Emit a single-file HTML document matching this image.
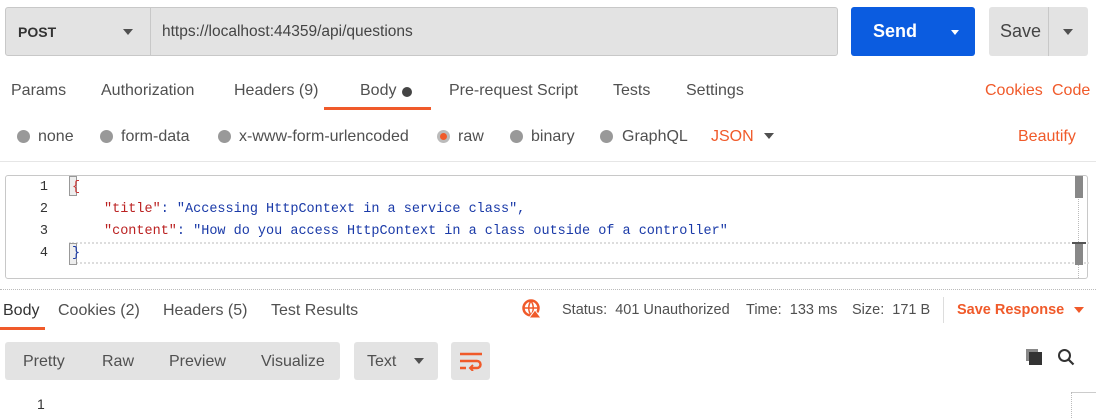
<!DOCTYPE html>
<html><head><meta charset="utf-8"><style>
*{box-sizing:border-box;margin:0;padding:0}
body{width:1096px;height:418px;background:#fff;font-family:"Liberation Sans",sans-serif;font-size:16px;color:#505050;position:relative;overflow:hidden}
.a{position:absolute;white-space:nowrap}
.or{color:#f05a2a}
.rad{position:absolute;width:13px;height:13px;border-radius:50%;background:#999;top:130px}
.mono{font-family:"Liberation Mono",monospace;font-size:13.5px}
.ln{position:absolute;width:20px;text-align:right;left:28px;color:#333}
.tri{display:block;width:0;height:0;border-left:5px solid transparent;border-right:5px solid transparent;border-top:6px solid #505050}
</style></head><body>
<div class="a" style="left:5px;top:7px;width:833px;height:49px;background:#e3e3e3;border:1px solid #c8c8c8;border-radius:3px"></div>
<div class="a" style="left:150px;top:8px;width:1px;height:47px;background:#c8c8c8"></div>
<div class="a" style="left:18px;top:24px;font-weight:bold;color:#333;font-size:14px">POST</div>
<div class="a" style="left:123px;top:29px"><span class="tri"></span></div>
<div class="a" style="left:162px;top:23px;color:#444;font-size:15.5px">https://localhost:44359/api/questions</div>
<div class="a" style="left:851px;top:7px;width:124px;height:49px;background:#0b5ce0;border-radius:3px"></div>
<div class="a" style="left:873px;top:21px;color:#fff;font-size:18px;font-weight:bold">Send</div>
<div class="a" style="left:951px;top:30px"><span class="tri" style="border-top-color:#fff;border-width:5px 4px 0"></span></div>
<div class="a" style="left:989px;top:7px;width:99px;height:49px;background:#e3e3e3;border-radius:3px"></div>
<div class="a" style="left:1048px;top:7px;width:1px;height:49px;background:#c8c8c8"></div>
<div class="a" style="left:1000px;top:21px;font-size:18px;color:#444">Save</div>
<div class="a" style="left:1063px;top:29px"><span class="tri"></span></div>
<div class="a" style="left:11px;top:82px">Params</div>
<div class="a" style="left:101px;top:82px">Authorization</div>
<div class="a" style="left:234px;top:82px">Headers (9)</div>
<div class="a" style="left:360px;top:82px">Body</div>
<div class="a" style="left:402px;top:87px;width:10px;height:10px;border-radius:50%;background:#444"></div>
<div class="a" style="left:324px;top:107px;width:107px;height:3px;background:#f05a2a"></div>
<div class="a" style="left:449px;top:82px">Pre-request Script</div>
<div class="a" style="left:613px;top:82px">Tests</div>
<div class="a" style="left:686px;top:82px">Settings</div>
<div class="a or" style="left:985px;top:82px">Cookies</div>
<div class="a or" style="left:1052px;top:82px">Code</div>
<div class="rad" style="left:17px"></div><div class="a" style="left:38px;top:128px">none</div>
<div class="rad" style="left:100px"></div><div class="a" style="left:121px;top:128px">form-data</div>
<div class="rad" style="left:218px"></div><div class="a" style="left:239px;top:128px">x-www-form-urlencoded</div>
<div class="rad" style="left:437px;background:#bbb"><div style="margin:3px;width:7px;height:7px;border-radius:50%;background:#f05a2a"></div></div><div class="a" style="left:458px;top:128px">raw</div>
<div class="rad" style="left:510px"></div><div class="a" style="left:531px;top:128px">binary</div>
<div class="rad" style="left:600px"></div><div class="a" style="left:622px;top:128px">GraphQL</div>
<div class="a or" style="left:711px;top:128px">JSON</div>
<div class="a" style="left:764px;top:133px"><span class="tri"></span></div>
<div class="a or" style="left:1018px;top:128px">Beautify</div>
<div class="a" style="left:0;top:161px;width:1096px;height:1px;background:#e6e6e6"></div>
<div class="a" style="left:5px;top:175px;width:1083px;height:104px;border:1px solid #c8c8c8;border-radius:3px"></div>
<div class="a" style="left:69px;top:242px;width:1020px;height:22px;border-top:2px dotted #ddd;border-bottom:2px dotted #ddd"></div>
<div class="a" style="left:69px;top:176px;width:8px;height:20px;border:1px solid #999;background:#eee"></div>
<div class="a" style="left:69px;top:243px;width:8px;height:22px;border:1px solid #999;background:#eee"></div>
<div class="a" style="left:1078px;top:176px;width:1px;height:102px;border-left:1px dotted #bbb"></div>
<div class="a" style="left:1075px;top:176px;width:8px;height:22px;background:#888"></div>
<div class="a" style="left:1075px;top:243px;width:8px;height:22px;background:#888"></div>
<div class="a" style="left:1072px;top:242px;width:14px;height:2px;background:#555"></div>
<div class="mono">
<div class="ln a" style="top:180px">1</div>
<div class="ln a" style="top:202px">2</div>
<div class="ln a" style="top:224px">3</div>
<div class="ln a" style="top:246px">4</div>
<div class="a" style="left:72px;top:180px;color:#c33">{</div>
<div class="a" style="left:104px;top:202px;color:#1a3aa8"><span style="color:#b22">"title"</span>: "Accessing HttpContext in a service class",</div>
<div class="a" style="left:104px;top:224px;color:#1a3aa8"><span style="color:#b22">"content"</span>: "How do you access HttpContext in a class outside of a controller"</div>
<div class="a" style="left:72px;top:246px;color:#1a3aa8">}</div>
</div>
<div class="a" style="left:0;top:289px;width:1096px;height:1px;border-top:1px dotted #bbb"></div>
<div class="a" style="left:3px;top:302px;color:#333">Body</div>
<div class="a" style="left:0;top:327px;width:45px;height:3px;background:#f05a2a"></div>
<div class="a" style="left:58px;top:302px">Cookies (2)</div>
<div class="a" style="left:163px;top:302px">Headers (5)</div>
<div class="a" style="left:271px;top:302px">Test Results</div>
<svg class="a" style="left:522px;top:299px" width="20" height="20" viewBox="0 0 20 20"><circle cx="9" cy="9" r="7.5" fill="none" stroke="#f05a2a" stroke-width="2.5"/><path d="M2 9h14M9 2c-3 4-3 10 0 14M9 2c3 4 3 10 0 14" stroke="#f05a2a" stroke-width="1.5" fill="none"/><path d="M13 11l6 8h-12z" fill="#f05a2a" stroke="#fff"/></svg>
<div class="a" style="left:562px;top:302px;font-size:14.5px">Status: &nbsp;401 Unauthorized</div>
<div class="a" style="left:746px;top:302px;font-size:14.5px">Time: &nbsp;133 ms</div>
<div class="a" style="left:852px;top:302px;font-size:14.5px">Size: &nbsp;171 B</div>
<div class="a" style="left:943px;top:297px;width:1px;height:26px;background:#ddd"></div>
<div class="a or" style="left:957px;top:302px;font-weight:bold;font-size:14.5px">Save Response</div>
<div class="a" style="left:1074px;top:307px"><span class="tri" style="border-top-color:#f05a2a"></span></div>
<div class="a" style="left:5px;top:342px;width:335px;height:38px;background:#e3e3e3;border-radius:3px"></div>
<div class="a" style="left:23px;top:353px">Pretty</div>
<div class="a" style="left:102px;top:353px">Raw</div>
<div class="a" style="left:169px;top:353px">Preview</div>
<div class="a" style="left:261px;top:353px">Visualize</div>
<div class="a" style="left:354px;top:342px;width:84px;height:38px;background:#e3e3e3;border-radius:3px"></div>
<div class="a" style="left:367px;top:353px">Text</div>
<div class="a" style="left:414px;top:358px"><span class="tri"></span></div>
<div class="a" style="left:451px;top:342px;width:39px;height:38px;background:#e3e3e3;border-radius:3px"></div>
<svg class="a" style="left:459px;top:351px" width="24" height="20" viewBox="0 0 24 20"><path d="M1 3h22M1 10h17a3.5 3.5 0 010 7h-6M1 17h6" stroke="#f05a2a" stroke-width="2.5" fill="none"/><path d="M14 14l-3 3 3 3" stroke="#f05a2a" stroke-width="2" fill="none"/></svg>
<svg class="a" style="left:1025px;top:348px" width="18" height="18" viewBox="0 0 18 18"><rect x="1" y="1" width="12" height="12" fill="#888"/><rect x="4" y="4" width="13" height="13" fill="#333"/></svg>
<svg class="a" style="left:1057px;top:348px" width="18" height="18" viewBox="0 0 18 18"><circle cx="7.5" cy="7.5" r="5.5" fill="none" stroke="#333" stroke-width="2"/><path d="M11.5 11.5l5 5" stroke="#333" stroke-width="2.2"/></svg>
<div class="a" style="left:37px;top:396px;color:#333;font-size:14px">1</div>
<div class="a" style="left:1071px;top:392px;width:25px;height:1px;background:#ccc"></div>
<div class="a" style="left:1071px;top:392px;width:1px;height:26px;border-left:1px dotted #bbb"></div>
</body></html>
